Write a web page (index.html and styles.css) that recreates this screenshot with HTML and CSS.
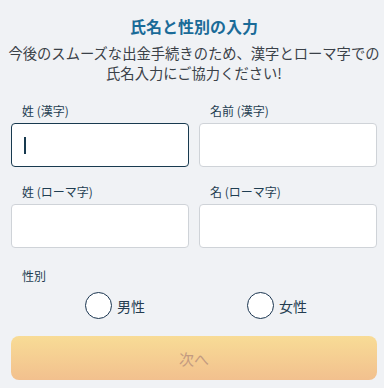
FILE: index.html
```html
<!DOCTYPE html>
<html lang="ja">
<head>
<meta charset="utf-8">
<link rel="stylesheet" href="styles.css">
</head>
<body>
<div class="page">
  <h1 class="title">氏名と性別の入力</h1>
  <p class="lead">今後のスムーズな出金手続きのため、漢字とローマ字での<br>氏名入力にご協力ください!</p>
  <div class="grid">
    <div class="field">
      <label class="label">姓 (漢字)</label>
      <div class="input focused"><span class="caret"></span></div>
    </div>
    <div class="field">
      <label class="label">名前 (漢字)</label>
      <div class="input"></div>
    </div>
    <div class="field">
      <label class="label">姓 (ローマ字)</label>
      <div class="input"></div>
    </div>
    <div class="field">
      <label class="label">名 (ローマ字)</label>
      <div class="input"></div>
    </div>
  </div>
  <div class="label gender-label">性別</div>
  <div class="radios">
    <div class="radio"><span class="circle"></span><span class="rtext">男性</span></div>
    <div class="radio"><span class="circle"></span><span class="rtext">女性</span></div>
  </div>
  <button class="next">次へ</button>
</div>
</body>
</html>
```
FILE: styles.css
```css
html, body {
  margin: 0;
  padding: 0;
  background: #f0f2f5;
}
body {
  font-family: "Noto Sans CJK JP", "Noto Sans", sans-serif;
  color: #2f3a44;
}
.page {
  padding: 14px 7px 0 11px;
}
.title {
  margin: 0;
  font-size: 16px;
  line-height: 24px;
  font-weight: 700;
  color: #1a6b98;
  text-align: center;
}
.lead {
  margin: 5px -8px 0 -8px;
  font-size: 14.3px;
  line-height: 20px;
  white-space: nowrap;
  color: #3a4148;
  text-align: center;
}
.grid {
  margin-top: 20px;
  display: grid;
  grid-template-columns: 1fr 1fr;
  column-gap: 10px;
  row-gap: 17px;
}
.field {
  display: flex;
  flex-direction: column;
}
.label {
  display: block;
  font-size: 12px;
  line-height: 16px;
  color: #1f3e52;
  padding-left: 11px;
}
.input {
  margin-top: 4px;
  height: 44px;
  box-sizing: border-box;
  background: #fff;
  border: 1px solid #cfd3d8;
  border-radius: 4px;
  display: flex;
  align-items: center;
  padding-left: 12px;
}
.input.focused {
  border: 1.5px solid #183a4f;
}
.caret {
  width: 1.5px;
  height: 17px;
  background: #183a4f;
}
.gender-label {
  margin-top: 20px;
}
.radios {
  margin-top: 8px;
  display: flex;
  gap: 102px;
  padding-left: 74px;
}
.radio {
  display: flex;
  align-items: center;
  gap: 5px;
}
.circle {
  width: 27px;
  height: 27px;
  box-sizing: border-box;
  border: 1.5px solid #1a3550;
  border-radius: 50%;
  background: #fff;
}
.rtext {
  font-size: 14px;
  color: #243c50;
}
.next {
  display: block;
  margin-top: 17px;
  width: 100%;
  height: 44px;
  border: none;
  border-radius: 8px;
  background: linear-gradient(#f8dc96, #f2c08e);
  font-family: "Noto Sans CJK JP", sans-serif;
  font-size: 15px;
  color: #c39a80;
  padding: 0;
}
```
